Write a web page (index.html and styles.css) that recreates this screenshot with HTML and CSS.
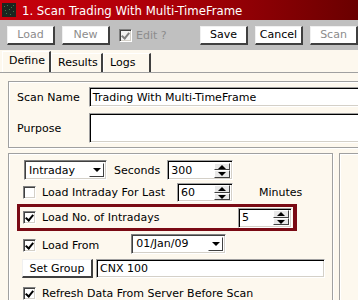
FILE: index.html
```html
<!DOCTYPE html>
<html>
<head>
<meta charset="utf-8">
<link rel="stylesheet" href="styles.css">
</head>
<body>
<div class="window">
  <div class="titlebar">
    <span class="appicon">
      <svg width="14" height="14" viewBox="0 0 14 14">
        <rect width="14" height="14" fill="#1b2620"/>
        <g fill="#3f7a4a">
          <rect x="2" y="3" width="1" height="1"/><rect x="5" y="2" width="1" height="1"/><rect x="9" y="4" width="1" height="1"/>
          <rect x="3" y="7" width="1" height="1"/><rect x="7" y="6" width="1" height="1"/><rect x="11" y="8" width="1" height="1"/>
          <rect x="4" y="10" width="1" height="1"/><rect x="8" y="11" width="1" height="1"/><rect x="11" y="2" width="1" height="1"/>
        </g>
      </svg>
    </span>
    <span class="title">1. Scan Trading With Multi-TimeFrame</span>
  </div>
  <div class="toolbar">
    <button class="btn tb disabled">Load</button>
    <button class="btn tb disabled">New</button>
    <span class="edit"><span class="cb checked dis"></span><span class="edit-label">Edit ?</span></span>
    <span class="spacer"></span>
    <button class="btn tb">Save</button>
    <button class="btn tb">Cancel</button>
    <button class="btn tb disabled last">Scan</button>
  </div>
  <div class="tabs">
    <span class="tab active">Define</span>
    <span class="tab">Results</span>
    <span class="tab">Logs</span>
  </div>
  <div class="page">
    <div class="group g-top">
      <div class="frow">
        <span class="flabel">Scan Name</span>
        <span class="field name">Trading With Multi-TimeFrame</span>
      </div>
      <div class="frow purpose">
        <span class="flabel">Purpose</span>
        <span class="field tall"></span>
      </div>
    </div>
    <div class="lower">
      <div class="group g-main">
        <div class="row r1">
          <span class="select intraday"><span class="sel-text">Intraday</span><span class="drop"></span></span>
          <span class="lbl seconds">Seconds</span>
          <span class="spin w300"><span class="spin-text">300</span><span class="spin-btns"><span class="up"></span><span class="down"></span></span></span>
        </div>
        <div class="row r2">
          <span class="cb"></span>
          <span class="lbl cbl">Load Intraday For Last</span>
          <span class="spin w60"><span class="spin-text">60</span><span class="spin-btns"><span class="up"></span><span class="down"></span></span></span>
          <span class="lbl minutes">Minutes</span>
        </div>
        <div class="row r3 highlight">
          <span class="cb checked"></span>
          <span class="lbl cbl">Load No. of Intradays</span>
          <span class="spin w5"><span class="spin-text">5</span><span class="spin-btns"><span class="up"></span><span class="down"></span></span></span>
        </div>
        <div class="row r4">
          <span class="cb checked"></span>
          <span class="lbl cbl">Load From</span>
          <span class="select date"><span class="sel-text">01/Jan/09</span><span class="drop"></span></span>
        </div>
        <div class="row r5">
          <button class="btn setgroup">Set Group</button>
          <span class="field group-field">CNX 100</span>
        </div>
        <div class="row r6">
          <span class="cb checked"></span>
          <span class="lbl cbl">Refresh Data From Server Before Scan</span>
        </div>
      </div>
      <div class="group g-side"></div>
    </div>
  </div>
</div>
</body>
</html>
```
FILE: styles.css
```css
html, body {
  margin: 0;
  padding: 0;
}
body {
  width: 358px;
  height: 300px;
  overflow: hidden;
  background: #fdf8ee;
  font-family: "DejaVu Sans", Verdana, sans-serif;
  font-size: 11px;
  color: #000;
}
.window {
  width: 358px;
  height: 300px;
  overflow: hidden;
}
.titlebar {
  height: 20px;
  display: flex;
  align-items: center;
  background: linear-gradient(to right, #c8000c 0%, #a80008 50%, #6a0000 100%);
}
.appicon {
  width: 14px;
  height: 14px;
  margin-left: 2px;
  display: flex;
}
.title {
  color: #fff;
  font-family: "DejaVu Sans Condensed", "DejaVu Sans", sans-serif;
  font-size: 13px;
  margin-left: 6px;
  white-space: nowrap;
}
.toolbar {
  height: 30px;
  background: #c0c0c0;
  display: flex;
  align-items: center;
  padding-left: 7px;
  box-sizing: border-box;
}
.btn {
  font-family: "DejaVu Sans", Verdana, sans-serif;
  font-size: 11px;
  color: #000;
  background: #fff;
  padding: 0;
  margin: 0;
  height: 19px;
  border-style: solid;
  border-width: 1px 2px 2px 1px;
  border-color: #f0f0f0 #404040 #404040 #f0f0f0;
  box-sizing: border-box;
}
.tb {
  width: 48px;
  margin-right: 7px;
}
.tb.last { margin-right: 0; }
.btn.disabled { color: #8c8c8c; }
.edit {
  display: flex;
  align-items: center;
  margin-left: 2px;
}
.edit-label {
  color: #8c8c8c;
  margin-left: 4px;
}
.spacer { flex: 1; }
.cb {
  width: 13px;
  height: 13px;
  box-sizing: border-box;
  background: #fff;
  border-style: solid;
  border-width: 1px;
  border-color: #808080 #fff #fff #808080;
  box-shadow: inset 1px 1px 0 #404040, inset -1px -1px 0 #d4d0c8;
  position: relative;
  flex: none;
}
.cb.dis { background: #f2f2f2; }
.cb.checked::after {
  content: "";
  position: absolute;
  left: 3px;
  top: 1px;
  width: 3px;
  height: 6px;
  border: solid #000;
  border-width: 0 2px 2px 0;
  transform: rotate(40deg);
}
.cb.dis.checked::after { border-color: #808080; }
.tabs {
  height: 23px;
  display: flex;
  align-items: flex-end;
  padding-left: 2px;
  border-bottom: 1px solid #a0a0a0;
  box-sizing: border-box;
}
.tab {
  height: 19px;
  box-sizing: border-box;
  padding: 2px 6px 0 6px;
  border-style: solid;
  border-width: 1px 2px 0 1px;
  border-color: #fff #404040 #404040 #fff;
  background: #fdf8ee;
}
.tab:nth-child(2) { width: 52px; }
.tab:nth-child(3) { width: 48px; }
.tab.active {
  width: 49px;
  height: 21px;
  padding-top: 2px;
}
.page {
  padding: 8px 0 0 8px;
}
.group {
  box-sizing: border-box;
  border: 1px solid #a0a0a0;
  box-shadow: inset 1px 1px 0 #fff, 1px 1px 0 #fff;
}
.g-top {
  width: 360px;
  height: 67px;
  border-right: none;
  padding: 5px 0 0 8px;
}
.frow {
  display: flex;
  align-items: center;
  height: 20px;
}
.frow.purpose {
  margin-top: 6px;
  height: 30px;
}
.flabel {
  width: 72px;
}
.field {
  background: #fff;
  box-sizing: border-box;
  border-style: solid;
  border-width: 1px;
  border-color: #a0a0a0 #fff #fff #a0a0a0;
  box-shadow: inset 1px 1px 0 #000, inset -1px -1px 0 #d4d0c8;
  display: flex;
  align-items: center;
  padding-left: 3px;
  white-space: nowrap;
}
.field.name {
  width: 280px;
  height: 20px;
}
.field.tall {
  width: 280px;
  height: 30px;
}
.lower {
  display: flex;
  margin-top: 5px;
}
.g-main {
  width: 336px;
  height: 160px;
  padding: 6px 0 0 8px;
}
.g-side {
  width: 20px;
  height: 160px;
  margin-left: 6px;
  border-right: none;
}
.row {
  display: flex;
  align-items: center;
}
.select {
  display: flex;
  align-items: center;
  box-sizing: border-box;
  background: #fff;
  border-style: solid;
  border-width: 1px;
  border-color: #808080 #fff #fff #808080;
  box-shadow: inset 1px 1px 0 #404040, inset -1px -1px 0 #d4d0c8;
  padding: 2px;
}
.sel-text {
  flex: 1;
  padding-left: 2px;
}
.drop {
  width: 15px;
  height: 14px;
  box-sizing: border-box;
  background: #fff;
  border-style: solid;
  border-width: 1px;
  border-color: #fff #404040 #404040 #fff;
  position: relative;
}
.drop::after {
  content: "";
  position: absolute;
  left: 3px;
  top: 4px;
  border-style: solid;
  border-width: 4px 4px 0 4px;
  border-color: #000 transparent transparent transparent;
}
.intraday {
  width: 83px;
  height: 20px;
  margin-left: 7px;
}
.lbl { white-space: nowrap; }
.seconds { margin-left: 7px; }
.spin {
  display: flex;
  align-items: center;
  box-sizing: border-box;
  background: #fff;
  border-style: solid;
  border-width: 1px;
  border-color: #a0a0a0 #fff #fff #a0a0a0;
  box-shadow: inset 1px 1px 0 #000, inset -1px -1px 0 #d4d0c8;
  padding: 2px;
}
.spin-text {
  flex: 1;
  padding-left: 1px;
}
.spin-btns {
  display: flex;
  flex-direction: column;
  width: 16px;
  height: 15px;
}
.spin-btns span {
  flex: 1;
  position: relative;
  background: #e8e8e8;
  border-style: solid;
  border-width: 1px;
  border-color: #fff #404040 #404040 #fff;
}
.spin-btns .up::after, .spin-btns .down::after {
  content: "";
  position: absolute;
  left: 3px;
  border-style: solid;
}
.spin-btns .up::after {
  top: 1px;
  border-width: 0 4px 4px 4px;
  border-color: transparent transparent #000 transparent;
}
.spin-btns .down::after {
  top: 1px;
  border-width: 4px 4px 0 4px;
  border-color: #000 transparent transparent transparent;
}
.w300 {
  width: 66px;
  height: 20px;
  margin-left: 7px;
}
.r2 { margin-top: 3px; height: 19px; }
.r2 .cb { margin-left: 6px; }
.cbl { margin-left: 6px; }
.w60 {
  width: 56px;
  height: 19px;
  margin-left: 12px;
}
.minutes { margin-left: 26px; }
.highlight {
  margin-top: 2px;
  width: 280px;
  height: 27px;
  box-sizing: border-box;
  border: 3px solid #7a0a14;
  border-right-width: 4px;
}
.highlight .cb { margin-left: 3px; }
.w5 {
  width: 54px;
  height: 20px;
  margin-left: auto;
  margin-right: 1px;
}
.r4 { margin-top: 2px; height: 21px; }
.r4 .cb { margin-left: 6px; margin-top: 4px; }
.r4 .cbl { margin-top: 4px; }
.date {
  width: 95px;
  height: 20px;
  margin-left: 32px;
}
.r5 { margin-top: 5px; }
.setgroup {
  width: 71px;
  height: 19px;
  margin-left: 5px;
  border-width: 1px 2px 2px 1px;
}
.group-field {
  width: 229px;
  height: 19px;
  margin-left: 3px;
}
.r6 { margin-top: 9px; }
.r6 .cb { margin-left: 6px; }
```
